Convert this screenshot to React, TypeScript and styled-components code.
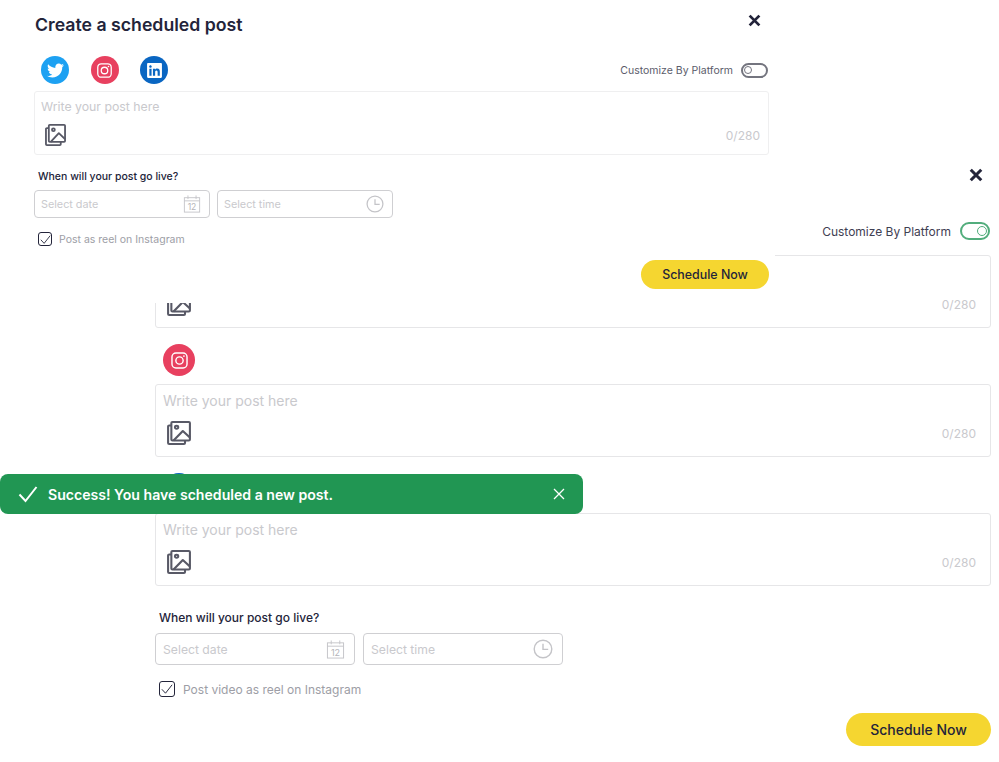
import React from "react";
import styled, { createGlobalStyle } from "styled-components";
import { FaTwitter, FaLinkedin } from "react-icons/fa";

const COLORS = {
  ink: "#23243a",
  label: "#5b5c6b",
  muted: "#c9c9cd",
  hint: "#9d9ea6",
  border: "#e6e6e8",
  field: "#cfcfd2",
  yellow: "#f5d630",
  green: "#219653",
  toggleOn: "#52ad7c",
  pink: "#e8405f",
  blue: "#1da1f2",
  linkedin: "#0a66c2",
};

const GlobalStyle = createGlobalStyle`
  html, body {
    margin: 0;
    padding: 0;
    background: #fff;
    font-family: Inter, "Liberation Sans", sans-serif;
  }
`;

const Canvas = styled.div`
  position: relative;
  width: 999px;
  height: 762px;
  overflow: hidden;
  background: #fff;
`;

const FrontPanel = styled.section`
  position: absolute;
  z-index: 2;
  left: 28px;
  top: 0;
  width: 747px;
  height: 303px;
  box-sizing: border-box;
  padding: 14px 6px 0;
  background: #fff;
  border-radius: 10px;
`;

const BackPanel = styled.section`
  position: absolute;
  z-index: 1;
  left: 148px;
  top: 152px;
  width: 851px;
  height: 610px;
  box-sizing: border-box;
  padding: 16px 8px 0 7px;
  background: #fff;
`;

const TitleRow = styled.div`
  display: flex;
  justify-content: space-between;
  align-items: flex-start;
  height: 22px;
`;

const Title = styled.h1`
  margin: 0 0 0 1px;
  font-size: 17.7px;
  line-height: 22px;
  font-weight: 600;
  color: ${COLORS.ink};
`;

const CloseButton = styled.button`
  display: flex;
  padding: 0;
  border: 0;
  background: none;
  color: ${COLORS.ink};
  margin-right: 8px;
  margin-left: auto;
`;

const SocialRow = styled.div`
  display: flex;
  align-items: center;
  height: 28px;
  margin-top: 20px;
  padding-left: 7px;
`;

const SocialIcons = styled.div`
  display: flex;
  gap: 21.5px;
`;

const SocialCircle = styled.div<{ $color: string; $large?: boolean }>`
  display: flex;
  align-items: center;
  justify-content: center;
  width: ${(p) => (p.$large ? "32px" : "28px")};
  height: ${(p) => (p.$large ? "32px" : "28px")};
  border-radius: 50%;
  color: #fff;
  background: ${(p) => p.$color};
`;

const ToggleGroup = styled.div<{ $large?: boolean }>`
  display: flex;
  align-items: center;
  gap: ${(p) => (p.$large ? "9px" : "8px")};
  margin-left: auto;
  margin-right: 1px;
  font-size: ${(p) => (p.$large ? "12px" : "10.5px")};
  color: ${(p) => (p.$large ? "#3f4052" : COLORS.label)};
`;

const Toggle = styled.div<{ $on?: boolean; $large?: boolean }>`
  display: flex;
  align-items: center;
  justify-content: ${(p) => (p.$on ? "flex-end" : "flex-start")};
  box-sizing: border-box;
  width: ${(p) => (p.$large ? "30px" : "27px")};
  height: ${(p) => (p.$large ? "18px" : "15px")};
  padding: 0 1px;
  border: 2px solid ${(p) => (p.$on ? COLORS.toggleOn : "#74757f")};
  border-radius: 10px;
`;

const ToggleKnob = styled.span<{ $on?: boolean; $large?: boolean }>`
  box-sizing: border-box;
  width: ${(p) => (p.$large ? "10px" : "8px")};
  height: ${(p) => (p.$large ? "10px" : "8px")};
  border: 1.7px solid ${(p) => (p.$on ? COLORS.toggleOn : "#74757f")};
  border-radius: 50%;
`;

const PostBox = styled.div<{ $large?: boolean }>`
  display: flex;
  flex-direction: column;
  box-sizing: border-box;
  height: ${(p) => (p.$large ? "73px" : "64px")};
  margin-top: ${(p) => (p.$large ? "8px" : "7px")};
  padding: ${(p) => (p.$large ? "7px 14px 11px 7px" : "7px 8px 8px 6px")};
  border: 1px solid ${(p) => (p.$large ? COLORS.border : "#efeff0")};
  border-radius: 3px;
  background: #fff;
`;

const Placeholder = styled.div<{ $large?: boolean }>`
  font-size: ${(p) => (p.$large ? "14px" : "12.3px")};
  line-height: ${(p) => (p.$large ? "17px" : "15px")};
  color: ${COLORS.muted};
`;

const BoxFooter = styled.div`
  display: flex;
  align-items: center;
  justify-content: space-between;
  margin-top: auto;
  padding-left: 4px;
`;

const Counter = styled.span`
  font-size: 12px;
  color: ${COLORS.muted};
`;

const ScheduleLabel = styled.div<{ $large?: boolean }>`
  margin-top: ${(p) => (p.$large ? "24px" : "14px")};
  padding-left: 4px;
  font-size: ${(p) => (p.$large ? "12px" : "10.5px")};
  line-height: 15px;
  font-weight: 450;
  color: ${COLORS.ink};
`;

const FieldRow = styled.div<{ $large?: boolean }>`
  display: flex;
  gap: ${(p) => (p.$large ? "8px" : "7px")};
  margin-top: ${(p) => (p.$large ? "8px" : "6px")};
`;

const Field = styled.div<{ $large?: boolean }>`
  display: flex;
  align-items: center;
  justify-content: space-between;
  box-sizing: border-box;
  width: ${(p) => (p.$large ? "200px" : "176px")};
  height: ${(p) => (p.$large ? "32px" : "28px")};
  padding: ${(p) => (p.$large ? "0 9px 0 7px" : "0 8px 0 6px")};
  border: 1px solid ${COLORS.field};
  border-radius: 4px;
  font-size: ${(p) => (p.$large ? "12.2px" : "10.8px")};
  color: ${COLORS.muted};
`;

const CheckRow = styled.div<{ $large?: boolean }>`
  display: flex;
  align-items: center;
  gap: ${(p) => (p.$large ? "8px" : "7px")};
  margin-top: ${(p) => (p.$large ? "16px" : "14px")};
  padding-left: 4px;
  font-size: ${(p) => (p.$large ? "12px" : "10.5px")};
  color: ${COLORS.hint};
`;

const CheckBox = styled.span<{ $large?: boolean }>`
  display: flex;
  align-items: center;
  justify-content: center;
  box-sizing: border-box;
  width: ${(p) => (p.$large ? "16px" : "14px")};
  height: ${(p) => (p.$large ? "16px" : "14px")};
  border: 1.2px solid ${COLORS.ink};
  border-radius: 3px;
`;

const Actions = styled.div<{ $large?: boolean }>`
  display: flex;
  justify-content: flex-end;
  margin-top: ${(p) => (p.$large ? "16px" : "14px")};
`;

const ScheduleButton = styled.button<{ $large?: boolean }>`
  width: ${(p) => (p.$large ? "145px" : "128px")};
  height: ${(p) => (p.$large ? "33px" : "29px")};
  padding: 0;
  border: 0;
  border-radius: 17px;
  background: ${COLORS.yellow};
  color: ${COLORS.ink};
  font-family: inherit;
  font-size: ${(p) => (p.$large ? "14px" : "12.4px")};
  font-weight: 450;
`;

const Toast = styled.div`
  position: absolute;
  z-index: 3;
  left: 0;
  top: 474px;
  display: flex;
  align-items: center;
  box-sizing: border-box;
  width: 583px;
  height: 40px;
  padding: 0 18px;
  border-radius: 8px;
  background: ${COLORS.green};
  color: #fff;
  font-size: 14.1px;
  font-weight: 600;
`;

const ToastText = styled.span`
  margin-left: 10px;
`;

const ToastClose = styled.span`
  display: flex;
  margin-left: auto;
`;

const BackHeader = styled.div`
  display: flex;
  height: 16px;
`;

const BackToggleRow = styled.div`
  display: flex;
  align-items: center;
  height: 18px;
  margin-top: 38px;
`;

const ClippedBox = styled(PostBox)`
  margin-top: 15px;
`;

const PlatformRow = styled.div`
  display: flex;
  height: 32px;
  margin-top: 16px;
  padding-left: 8px;
`;

const CloseIcon = ({ size }: { size: number }) => (
  <svg width={size} height={size} viewBox="0 0 12 12" fill="none">
    <path d="M1.5 1.5l9 9M10.5 1.5l-9 9" stroke="currentColor" strokeWidth="2.6" />
  </svg>
);

const InstagramIcon = ({ size }: { size: number }) => (
  <svg width={size} height={size} viewBox="0 0 24 24" fill="none" stroke="currentColor" strokeWidth="1.8">
    <rect x="2.5" y="2.5" width="19" height="19" rx="5" />
    <circle cx="12" cy="12" r="4.6" />
    <circle cx="17.6" cy="6.4" r="1.1" fill="currentColor" stroke="none" />
  </svg>
);

const ImagesIcon = ({ large }: { large?: boolean }) => (
  <svg
    width={large ? 24 : 21}
    height={large ? 24 : 22}
    viewBox="0 0 22 24"
    fill="none"
    stroke="#585966"
    strokeWidth="1.9"
    strokeLinejoin="round"
    preserveAspectRatio="none"
  >
    <rect x="4" y="1" width="17" height="18.5" rx="1" />
    <path d="M4 4.5H2a1 1 0 0 0-1 1V22a1 1 0 0 0 1 1h13.5a1 1 0 0 0 1-1v-2.5" />
    <circle cx="8.8" cy="6.3" r="1.5" />
    <path d="M6 19.5L14.5 10l6.5 6.5" />
  </svg>
);

const CalendarIcon = ({ size }: { size: number }) => (
  <svg width={size} height={size} viewBox="0 0 20 20" fill="none" stroke="#c4c4c8" strokeWidth="1">
    <rect x="1.5" y="3" width="17" height="16" />
    <path d="M1.5 6.5h17M5.5 0.5v4M14.5 0.5v4" />
    <text x="10" y="16.8" textAnchor="middle" fontSize="9.5" fontFamily="Inter, sans-serif" fill="#b4b4b9" stroke="none">
      12
    </text>
  </svg>
);

const ClockIcon = ({ size }: { size: number }) => (
  <svg width={size} height={size} viewBox="0 0 20 20" fill="none" stroke="#c4c4c8" strokeWidth="1.4">
    <circle cx="10" cy="10" r="8.8" />
    <path d="M10 4.8v5.6h5.2" />
  </svg>
);

const CheckMark = ({ size, color, width }: { size: number; color: string; width: number }) => (
  <svg width={size} height={size} viewBox="0 0 20 20" fill="none" stroke={color} strokeWidth={width}>
    <path d="M1.5 10.5l6 6.5L18.5 3" />
  </svg>
);

const SmallCross = () => (
  <svg width="12" height="12" viewBox="0 0 12 12" fill="none" stroke="#fff" strokeWidth="1.3">
    <path d="M1 1l10 10M11 1L1 11" />
  </svg>
);

const ScheduleFields = ({ large }: { large?: boolean }) => (
  <>
    <ScheduleLabel $large={large}>When will your post go live?</ScheduleLabel>
    <FieldRow $large={large}>
      <Field $large={large}>
        Select date
        <CalendarIcon size={large ? 19 : 18} />
      </Field>
      <Field $large={large}>
        Select time
        <ClockIcon size={large ? 20 : 18} />
      </Field>
    </FieldRow>
  </>
);

const LargeBox = () => (
  <>
    <Placeholder $large>Write your post here</Placeholder>
    <BoxFooter>
      <ImagesIcon large />
      <Counter>0/280</Counter>
    </BoxFooter>
  </>
);

const App = () => {
  return (
    <Canvas>
      <GlobalStyle />

      <BackPanel>
        <BackHeader>
          <CloseButton>
            <CloseIcon size={14} />
          </CloseButton>
        </BackHeader>
        <BackToggleRow>
          <ToggleGroup $large>
            Customize By Platform
            <Toggle $on $large>
              <ToggleKnob $on $large />
            </Toggle>
          </ToggleGroup>
        </BackToggleRow>

        <ClippedBox $large>
          <LargeBox />
        </ClippedBox>

        <PlatformRow>
          <SocialCircle $color={COLORS.pink} $large>
            <InstagramIcon size={19} />
          </SocialCircle>
        </PlatformRow>
        <PostBox $large>
          <LargeBox />
        </PostBox>

        <PlatformRow>
          <SocialCircle $color={COLORS.linkedin} $large>
            <FaLinkedin size={18} />
          </SocialCircle>
        </PlatformRow>
        <PostBox $large>
          <LargeBox />
        </PostBox>

        <ScheduleFields large />
        <CheckRow $large>
          <CheckBox $large>
            <CheckMark size={12} color={COLORS.ink} width={1.6} />
          </CheckBox>
          Post video as reel on Instagram
        </CheckRow>
        <Actions $large>
          <ScheduleButton $large>Schedule Now</ScheduleButton>
        </Actions>
      </BackPanel>

      <FrontPanel>
        <TitleRow>
          <Title>Create a scheduled post</Title>
          <CloseButton>
            <CloseIcon size={13} />
          </CloseButton>
        </TitleRow>
        <SocialRow>
          <SocialIcons>
            <SocialCircle $color={COLORS.blue}>
              <FaTwitter size={17} />
            </SocialCircle>
            <SocialCircle $color={COLORS.pink}>
              <InstagramIcon size={17} />
            </SocialCircle>
            <SocialCircle $color={COLORS.linkedin}>
              <FaLinkedin size={17} />
            </SocialCircle>
          </SocialIcons>
          <ToggleGroup>
            Customize By Platform
            <Toggle>
              <ToggleKnob />
            </Toggle>
          </ToggleGroup>
        </SocialRow>
        <PostBox>
          <Placeholder>Write your post here</Placeholder>
          <BoxFooter>
            <ImagesIcon />
            <Counter>0/280</Counter>
          </BoxFooter>
        </PostBox>
        <ScheduleFields />
        <CheckRow>
          <CheckBox>
            <CheckMark size={11} color={COLORS.ink} width={1.6} />
          </CheckBox>
          Post as reel on Instagram
        </CheckRow>
        <Actions>
          <ScheduleButton>Schedule Now</ScheduleButton>
        </Actions>
      </FrontPanel>

      <Toast>
        <CheckMark size={20} color="#fff" width={2} />
        <ToastText>Success! You have scheduled a new post.</ToastText>
        <ToastClose>
          <SmallCross />
        </ToastClose>
      </Toast>
    </Canvas>
  );
};

export default App;
